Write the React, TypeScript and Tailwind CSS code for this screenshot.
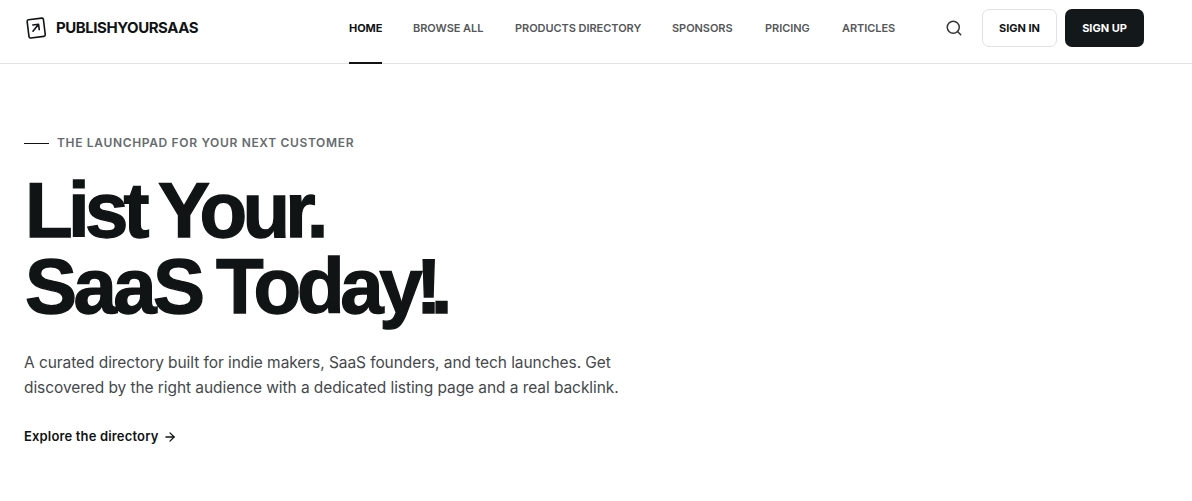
import * as React from "react"
import { ArrowRight, Search } from "lucide-react"
import clsx from "clsx"

const navItems = [
  { label: "HOME", width: "w-[33px]", active: true },
  { label: "BROWSE ALL", width: "w-[71px]" },
  { label: "PRODUCTS DIRECTORY", width: "w-[126px]" },
  { label: "SPONSORS", width: "w-[62px]" },
  { label: "PRICING", width: "w-[46px]" },
  { label: "ARTICLES", width: "w-[53px]" },
]

function Logo() {
  return (
    <a href="#" className="flex w-[325px] shrink-0 items-center text-[#111414]">
      <svg width="24" height="24" viewBox="0 0 24 24" fill="none" stroke="currentColor" strokeWidth="1.6" strokeLinecap="round" strokeLinejoin="round">
        <g transform="rotate(-7 12 12)">
          <rect x="4" y="2.9" width="16.4" height="18.4" rx="1.6" />
          <path d="M8.6 14.8 L15 8.6 M9.2 8.6 H15 V14" />
        </g>
      </svg>
      <span className="ml-2 text-[15px] font-bold tracking-[-0.45px]">PUBLISHYOURSAAS</span>
    </a>
  )
}

function Header() {
  return (
    <header className="flex h-16 border-b border-[#e2e3e3] pl-6 pb-[7px]">
      <Logo />
      <nav className="flex h-16 shrink-0 gap-[31px]">
        {navItems.map((item) => (
          <a
            key={item.label}
            href="#"
            className={clsx(
              "flex h-16 items-center border-b-2 pb-[5px] text-[11px] tracking-[-0.05px] whitespace-nowrap",
              item.width,
              item.active ? "border-[#111414] font-bold text-[#111414]" : "border-transparent font-semibold text-[#555858]"
            )}
          >
            {item.label}
          </a>
        ))}
      </nav>
      <div className="ml-[50px] flex items-center">
        <Search size={18} strokeWidth={2} className="text-[#333637]" />
        <button className="ml-[19px] h-[38px] w-[75px] rounded-[7px] border border-[#dfe1e2] text-[11px] font-bold text-[#111414]">
          SIGN IN
        </button>
        <button className="ml-2 h-[38px] w-[79px] rounded-[7px] bg-[#13181a] text-[11px] font-bold text-white">
          SIGN UP
        </button>
      </div>
    </header>
  )
}

function Hero() {
  return (
    <main className="px-6 pt-[70px]">
      <div className="flex h-[18px] items-center">
        <span className="h-px w-[25px] bg-[#111414]" />
        <span className="ml-2 text-[12px] font-semibold tracking-[0.66px] whitespace-nowrap text-[#656b6d]">
          THE LAUNCHPAD FOR YOUR NEXT CUSTOMER
        </span>
      </div>
      <h1 className="mt-[20px] pl-px font-['Liberation_Sans',Arial,sans-serif] text-[78px] leading-[76px] font-bold whitespace-nowrap text-[#111414] [-webkit-text-stroke:1.3px_#111414]">
        <span className="block tracking-[-4.7px] [word-spacing:-2.5px]">List Your.</span>
        <span className="block tracking-[-3.6px] [word-spacing:-3.5px]">
          SaaS <span className="tracking-[-4.3px]">Toda</span>
          <span className="tracking-[-7px]">y</span>
          <span className="tracking-[-11px]">!</span>.
        </span>
      </h1>
      <p className="mt-[26px] text-[15.5px] leading-[25px] tracking-[-0.07px] whitespace-nowrap text-[#44494c]">
        A curated directory built for indie makers, SaaS founders, and tech launches. Get
        <br />
        discovered by the right audience with a dedicated listing page and a real backlink.
      </p>
      <a href="#" className="mt-[27px] flex h-5 items-center gap-[5px] text-[13px] font-semibold tracking-[0.16px] text-[#111414]">
        Explore the directory
        <ArrowRight size={14} strokeWidth={2.2} />
      </a>
    </main>
  )
}

export default function App() {
  return (
    <div className="h-[501px] w-[1192px] overflow-hidden bg-white font-['Inter',sans-serif]">
      <Header />
      <Hero />
    </div>
  )
}
